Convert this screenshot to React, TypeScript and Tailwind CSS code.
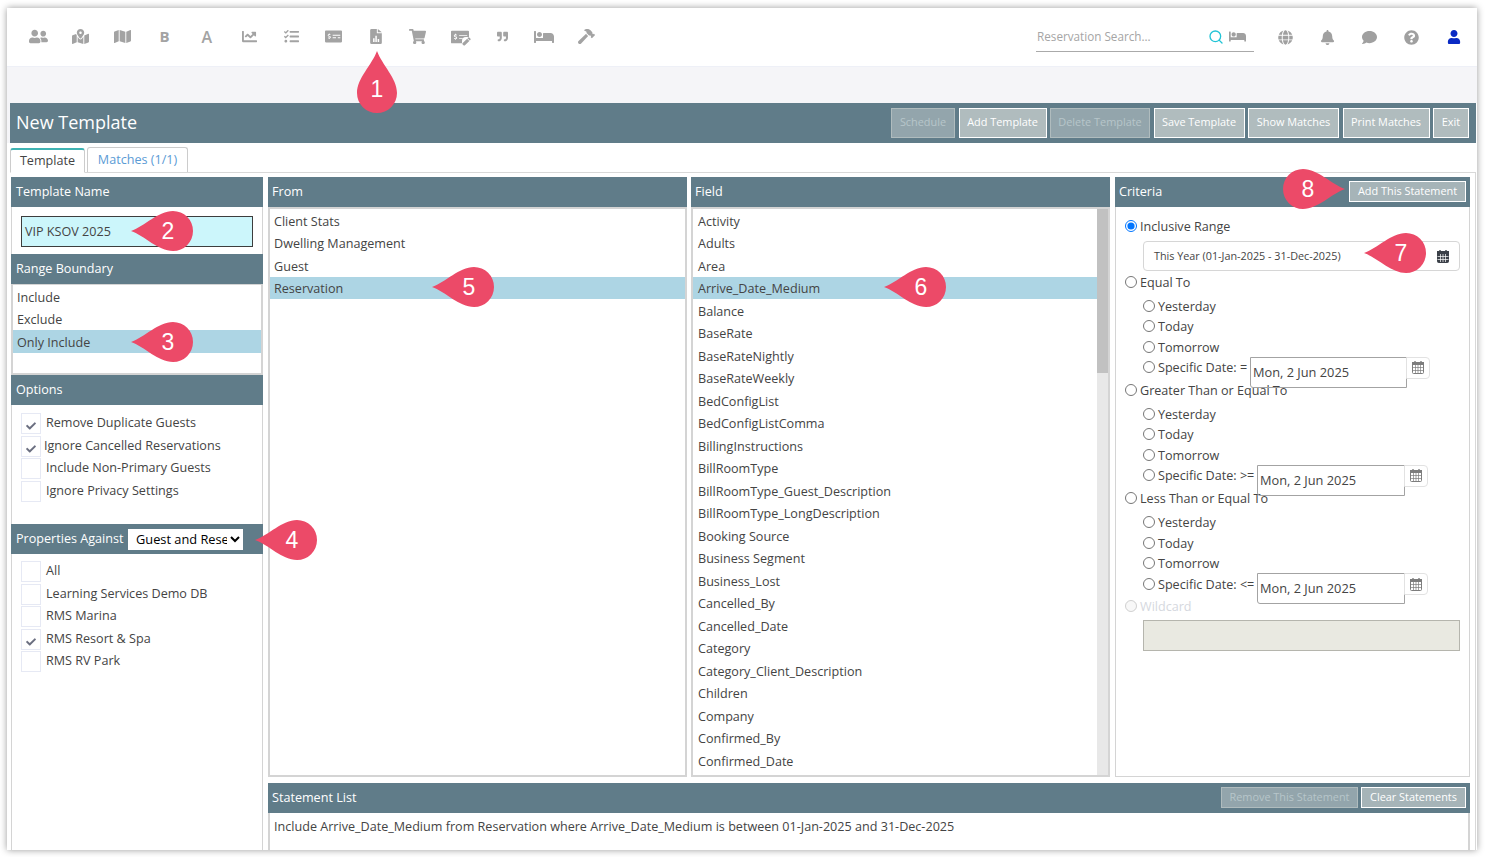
import { useState } from "react"
import {
  FaUserFriends,
  FaMapMarkedAlt,
  FaMap,
  FaChartLine,
  FaTasks,
  FaMoneyCheckAlt,
  FaShoppingCart,
  FaPen,
  FaQuoteRight,
  FaBed,
  FaHammer,
  FaGlobe,
  FaBell,
  FaComment,
  FaQuestionCircle,
  FaUser,
  FaCheck,
} from "react-icons/fa"
import { Search } from "lucide-react"

const fromItems = ["Client Stats", "Dwelling Management", "Guest", "Reservation"]

const fieldItems = [
  "Activity",
  "Adults",
  "Area",
  "Arrive_Date_Medium",
  "Balance",
  "BaseRate",
  "BaseRateNightly",
  "BaseRateWeekly",
  "BedConfigList",
  "BedConfigListComma",
  "BillingInstructions",
  "BillRoomType",
  "BillRoomType_Guest_Description",
  "BillRoomType_LongDescription",
  "Booking Source",
  "Business Segment",
  "Business_Lost",
  "Cancelled_By",
  "Cancelled_Date",
  "Category",
  "Category_Client_Description",
  "Children",
  "Company",
  "Confirmed_By",
  "Confirmed_Date",
]

// file with bars, no match in the free set
function FileChart() {
  return (
    <svg viewBox="0 0 14 18" className="w-[12px] h-[15px]">
      <path d="M1.500 0H8v5h6v11.500a1.500 1.500 0 0 1-1.500 1.500h-11A1.500 1.500 0 0 1 0 16.500V1.500A1.500 1.500 0 0 1 1.500 0Z" fill="currentColor" />
      <path d="M9.200 0L14 4H9.200Z" fill="currentColor" />
      <path d="M3.500 11h1.800v4.500H3.500ZM6.200 8h1.800v7.500H6.200ZM9 12h1.800v3.500H9Z" fill="#fff" />
    </svg>
  )
}

// calendar with a day grid
function CalendarGrid({ dark }: { dark?: boolean }) {
  const c = dark ? "#3b4048" : "#7d7d7d"
  return (
    <svg viewBox="0 0 12 13" className="w-[12px] h-[13px]">
      <rect x="0.500" y="1.500" width="11" height="11" rx="1" fill={dark ? c : "none"} stroke={c} />
      <rect x="0" y="1" width="12" height="3" fill={c} />
      <path d="M3 0v2M9 0v2" stroke={c} strokeWidth="1.400" />
      <path d="M0.500 6.500h11M0.500 9.500h11M3.500 4v8M6 4v8M8.500 4v8" stroke={dark ? "#fff" : c} strokeWidth="0.700" />
    </svg>
  )
}

function CheckEdit() {
  return (
    <span className="relative flex">
      <FaMoneyCheckAlt size={18} />
      <FaPen size={9} className="absolute right-[-2px] bottom-[0px] bg-white rounded-sm" />
    </span>
  )
}

const toolIcons = [
  <FaUserFriends size={19} />,
  <FaMapMarkedAlt size={17} />,
  <FaMap size={17} />,
  <span className="text-[15px] leading-none font-bold">B</span>,
  <span className="text-[16px] leading-none font-semibold">A</span>,
  <FaChartLine size={15} />,
  <FaTasks size={15} />,
  <FaMoneyCheckAlt size={17} />,
  <FileChart />,
  <FaShoppingCart size={17} />,
  <CheckEdit />,
  <FaQuoteRight size={11} />,
  <FaBed size={20} />,
  <FaHammer size={17} />,
]

function Badge({ dir, x, y, n, tx }: { dir: "left" | "right" | "up"; x: number; y: number; n: number; tx: number }) {
  const w = dir === "up" ? 40 : 62
  const h = dir === "up" ? 62 : 40
  return (
    <div className="absolute z-20" style={{ left: x, top: y, width: w, height: h }}>
      <svg viewBox={`0 0 ${w} ${h}`} width={w} height={h} className="block">
        {dir === "left" && <path d="M0 20C14 15 27 0 42 0a20 20 0 0 1 0 40C27 40 14 25 0 20Z" fill="#ec4a68" />}
        {dir === "right" && <path d="M62 20C48 15 35 0 20 0a20 20 0 0 0 0 40C35 40 48 25 62 20Z" fill="#ec4a68" />}
        {dir === "up" && <path d="M20 0C25 14 40 27 40 42a20 20 0 0 1-40 0C0 27 15 14 20 0Z" fill="#ec4a68" />}
      </svg>
      <span
        className="absolute text-white text-[23px] leading-[26px] font-['Liberation_Sans',sans-serif] -translate-x-1/2 -translate-y-1/2"
        style={{ left: tx, top: dir === "up" ? 38 : 20 }}
      >
        {n}
      </span>
    </div>
  )
}

function PanelHead({ children, wide }: { children: React.ReactNode; wide?: boolean }) {
  return (
    <div className={`h-[30px] bg-[#607c89] text-white text-[12.600px] flex items-center shrink-0 ${wide ? "px-[5px]" : "px-[4px]"}`}>
      {children}
    </div>
  )
}

function TopButton({ label, w, off }: { label: string; w: number; off?: boolean }) {
  return (
    <div
      className={`h-[30px] flex items-center justify-center text-[10.900px] pb-[1px] border ${
        off ? "bg-[#93a5ac] border-[#b0bcbe] text-[#b7c5ca]" : "bg-[#b0bcbe] border-white text-white"
      }`}
      style={{ width: w }}
    >
      {label}
    </div>
  )
}

function SmallButton({ label, w, off }: { label: string; w: number; off?: boolean }) {
  return (
    <div
      className={`h-[21px] mb-[1px] flex items-center justify-center text-[10.900px] border ${
        off ? "bg-[#93a5ac] border-[#b0bcbe] text-[#b7c5ca]" : "bg-[#a6b4b8] border-white text-white"
      }`}
      style={{ width: w }}
    >
      {label}
    </div>
  )
}

function CheckRow({ label, on, tight }: { label: string; on?: boolean; tight?: boolean }) {
  return (
    <div className="h-[22.500px] flex items-center">
      <span className="w-[20px] h-[21px] border border-[#e6e9f4] flex items-center justify-center shrink-0">
        {on && <FaCheck size={10} className="text-[#6b6f80] mt-[5px]" />}
      </span>
      <span className={`text-[12.600px] text-[#444] ${tight ? "ml-[3px]" : "ml-[5px]"}`}>{label}</span>
    </div>
  )
}

function ListRow({ label, on }: { label: string; on?: boolean }) {
  return (
    <div className={`h-[22.500px] flex items-center pt-[4px] px-[4px] text-[12.600px] text-[#444] ${on ? "bg-[#add5e4]" : ""}`}>{label}</div>
  )
}

function Radio({ label, checked, disabled, h, sub }: { label: string; checked?: boolean; disabled?: boolean; h: number; sub?: boolean }) {
  const [on] = useState(!!checked)
  return (
    <label className={`flex items-center ${sub ? "pl-[27px]" : "pl-[9px]"}`} style={{ height: h }}>
      <input type="radio" checked={on} disabled={disabled} readOnly className="m-0 w-[12px] h-[12px] -mt-[3px]" />
      <span className={`ml-[3px] text-[12.600px] ${disabled ? "text-[#d5d8de]" : "text-[#444]"}`}>{label}</span>
    </label>
  )
}

function DateRow({ label, w, input, btn, gap }: { label: string; w: number; input: number; btn: number; gap: number }) {
  return (
    <div className="h-[20.500px] flex items-center pl-[27px]">
      <input type="radio" readOnly checked={false} className="m-0 w-[12px] h-[12px] -mt-[3px] shrink-0" />
      <span className="ml-[3px] text-[12.600px] text-[#444] shrink-0 whitespace-nowrap" style={{ width: w }}>
        {label}
      </span>
      <div className="flex items-start h-[31px] mt-[7px] relative z-10 shrink-0" style={{ marginLeft: gap }}>
        <div className="h-[31px] border border-[#a3a3a3] rounded-bl-[3px] flex items-center px-[2px] pt-[1px] text-[12.800px] text-[#444]" style={{ width: input }}>
          Mon, 2 Jun 2025
        </div>
        <div className="h-[22px] border border-[#e2e2e2] rounded-r-[4px] flex items-center justify-center -ml-[1px]" style={{ width: btn }}>
          <CalendarGrid />
        </div>
      </div>
    </div>
  )
}

function QuickDates() {
  return (
    <div className="pt-[2.750px]">
      <Radio sub h={20.5} label="Yesterday" />
      <Radio sub h={20.5} label="Today" />
      <Radio sub h={20.5} label="Tomorrow" />
    </div>
  )
}

export default function App() {
  return (
    <div className="relative w-[1485px] h-[857px] overflow-hidden bg-white font-['Open_Sans',sans-serif]">
      <div className="ml-[7px] mt-[8px] w-[1470px] h-[842px] bg-white shadow-[0_0_7px_rgba(0,0,0,0.4)] overflow-hidden flex flex-col">
        {/* Top bar */}
        <div className="h-[59px] shrink-0 border-b border-[#eef0f7] flex items-center relative">
          <div className="flex items-center ml-[10px] -mt-[1px] text-[#a3a3a3]">
            {toolIcons.map((icon, i) => (
              <div key={i} className="w-[42.200px] flex justify-center">
                {icon}
              </div>
            ))}
          </div>
          <div className="flex items-center ml-auto">
            <div className="w-[218px] h-[30px] border-b border-[#aaa] flex items-center justify-between pl-[1px] pr-[8px] text-[#a0a0a0]">
              <span className="text-[11.700px] text-[#a5a5a5]">Reservation Search...</span>
              <span className="flex items-center gap-[5px]">
                <Search size={16} className="text-[#22c4d6]" />
                <FaBed size={17} />
              </span>
            </div>
            <div className="flex items-center text-[#a0a0a0] ml-[10px] mr-[2px]">
              <div className="w-[42.200px] flex justify-center"><FaGlobe size={15} /></div>
              <div className="w-[42.200px] flex justify-center"><FaBell size={15} /></div>
              <div className="w-[42.200px] flex justify-center"><FaComment size={15} /></div>
              <div className="w-[42.200px] flex justify-center"><FaQuestionCircle size={15} /></div>
              <div className="w-[42.200px] flex justify-center text-[#0a2ac4]"><FaUser size={14} /></div>
            </div>
          </div>
        </div>
        <div className="h-[36px] shrink-0 bg-[#f5f5f8]" />

        {/* Title bar */}
        <div className="relative">
          <div className="absolute left-0 top-0 w-[3px] h-[40px] bg-[#f5f5f8]" />
          <div className="h-[40px] ml-[3px] mr-[1px] bg-[#607c89] flex items-center pl-[6px] pr-[7px] gap-[3.500px]">
            <span className="text-white text-[18px] mr-auto -mt-[2px]">New Template</span>
            <TopButton off label="Schedule" w={64} />
            <TopButton label="Add Template" w={88} />
            <TopButton off label="Delete Template" w={100} />
            <TopButton label="Save Template" w={91} />
            <TopButton label="Show Matches" w={91} />
            <TopButton label="Print Matches" w={87} />
            <TopButton label="Exit" w={36} />
          </div>
        </div>

        {/* Tabs */}
        <div className="h-[30px] shrink-0 ml-[3px] mr-[1px] border-b border-[#d8d8d8] flex items-end gap-[2px] pt-[5px]">
          <div className="w-[75px] h-[25px] -mb-[1px] bg-white border border-[#ccc] border-b-white border-t-2 border-t-[#3fb3b3] rounded-t-[3px] flex items-center justify-center text-[12.600px] text-[#444]">
            Template
          </div>
          <div className="w-[101px] h-[25px] border border-[#ccc] border-b-0 rounded-t-[3px] flex items-center justify-center text-[12.600px] text-[#5b9bd5]">
            Matches (1/1)
          </div>
        </div>

        {/* Main area */}
        <div className="flex-1 min-h-0 flex pl-[4px] pt-[4px] border-r border-[#d8d8d8] mr-[1px]">
          {/* Left column */}
          <div className="w-[252px] shrink-0 flex flex-col">
            <PanelHead wide>Template Name</PanelHead>
            <div className="h-[47px] pl-[9px] pt-[9px] pr-[9px] border-x border-[#d4d4d4]">
              <div className="h-[31px] bg-[#ccf6fb] border border-[#3d3d3d] flex items-center px-[3px] pt-[2px] text-[12.600px] text-[#444]">VIP KSOV 2025</div>
            </div>
            <PanelHead wide>Range Boundary</PanelHead>
            <div className="h-[91px] border-2 border-t border-[#d4d4d4]">
              <ListRow label="Include" />
              <ListRow label="Exclude" />
              <ListRow on label="Only Include" />
            </div>
            <PanelHead wide>Options</PanelHead>
            <div className="h-[119px] pl-[9px] pt-[7.500px] border-x border-[#d4d4d4]">
              <CheckRow on label="Remove Duplicate Guests" />
              <CheckRow on tight label="Ignore Cancelled Reservations" />
              <CheckRow label="Include Non-Primary Guests" />
              <CheckRow label="Ignore Privacy Settings" />
            </div>
            <PanelHead wide>
              <span className="w-[112px] shrink-0 whitespace-nowrap">Properties Against</span>
              <select className="w-[115px] h-[21px] bg-white text-[12.800px] text-black pl-[4px] outline-none" defaultValue="both">
                <option value="both">Guest and Reservation</option>
              </select>
            </PanelHead>
            <div className="flex-1 pl-[9px] pt-[6.500px] border-x border-[#d4d4d4]">
              <CheckRow label="All" />
              <CheckRow label="Learning Services Demo DB" />
              <CheckRow label="RMS Marina" />
              <CheckRow on label="RMS Resort & Spa" />
              <CheckRow label="RMS RV Park" />
            </div>
          </div>

          {/* Right part */}
          <div className="ml-[5px] w-[1202px] flex flex-col">
            <div className="h-[600px] shrink-0 flex">
              <div className="w-[419px] flex flex-col">
                <PanelHead>From</PanelHead>
                <div className="flex-1 border-2 border-[#d4d4d4]">
                  {fromItems.map((item) => (
                    <ListRow key={item} label={item} on={item === "Reservation"} />
                  ))}
                </div>
              </div>
              <div className="w-[419px] ml-[4px] flex flex-col">
                <PanelHead>Field</PanelHead>
                <div className="flex-1 min-h-0 border-2 border-[#d4d4d4] flex overflow-hidden">
                  <div className="flex-1">
                    {fieldItems.map((item) => (
                      <div
                        key={item}
                        className={`h-[22.500px] flex items-center pt-[4px] pl-[5px] text-[12.600px] text-[#444] ${item === "Arrive_Date_Medium" ? "bg-[#add5e4]" : ""}`}
                      >
                        {item}
                      </div>
                    ))}
                  </div>
                  <div className="w-[11px] bg-[#e8e8e8]">
                    <div className="h-[164px] bg-[#c1c1c1]" />
                  </div>
                </div>
              </div>
              <div className="w-[355px] ml-[5px] flex flex-col">
                <PanelHead>
                  <span className="mr-auto">Criteria</span>
                  <SmallButton label="Add This Statement" w={117} />
                </PanelHead>
                <div className="flex-1 border border-[#d4d4d4] border-t-0 pt-[9px]">
                  <Radio checked h={22} label="Inclusive Range" />
                  <div className="ml-[27px] mr-[9px] mt-[3px] h-[30px] border border-[#d6d6d6] rounded-[4px] flex items-center justify-between pl-[10px] pr-[10px] text-[10.800px] text-[#444]">
                    <span>This Year (01-Jan-2025 - 31-Dec-2025)</span>
                    <CalendarGrid dark />
                  </div>
                  <div className="mt-[1px]"><Radio h={22} label="Equal To" /></div>
                  <QuickDates />
                  <DateRow label="Specific Date: =" w={89} gap={3} input={157} btn={24} />
                  <div className="mt-[1.500px]"><Radio h={22} label="Greater Than or Equal To" /></div>
                  <QuickDates />
                  <DateRow label="Specific Date: >=" w={95} gap={4} input={148} btn={24} />
                  <div className="mt-[1.500px]"><Radio h={22} label="Less Than or Equal To" /></div>
                  <QuickDates />
                  <DateRow label="Specific Date: <=" w={95} gap={4} input={148} btn={24} />
                  <div className="mt-[1.500px]"><Radio disabled h={22} label="Wildcard" /></div>
                  <div className="ml-[27px] mr-[9px] mt-[1px] h-[31px] bg-[#e9e9e1] border border-[#b5b5ad]" />
                </div>
              </div>
            </div>
            <div className="mt-[6px] flex-1 min-h-0 flex flex-col">
              <PanelHead>
                <span className="mr-auto">Statement List</span>
                <SmallButton off label="Remove This Statement" w={137} />
                <span className="ml-[3px]"><SmallButton label="Clear Statements" w={105} /></span>
              </PanelHead>
              <div className="flex-1 border-x-2 border-[#d4d4d4] px-[4px] pt-[5px] text-[12.600px] text-[#444]">
                Include Arrive_Date_Medium from Reservation where Arrive_Date_Medium is between 01-Jan-2025 and 31-Dec-2025
              </div>
            </div>
          </div>
        </div>
      </div>

      <Badge dir="up" x={357} y={51} n={1} tx={20} />
      <Badge dir="left" x={131} y={211} n={2} tx={37} />
      <Badge dir="left" x={131} y={322} n={3} tx={37} />
      <Badge dir="left" x={255} y={520} n={4} tx={37} />
      <Badge dir="left" x={432} y={267} n={5} tx={37} />
      <Badge dir="left" x={884} y={267} n={6} tx={37} />
      <Badge dir="left" x={1364} y={233} n={7} tx={37} />
      <Badge dir="right" x={1283} y={169} n={8} tx={25} />
    </div>
  )
}
